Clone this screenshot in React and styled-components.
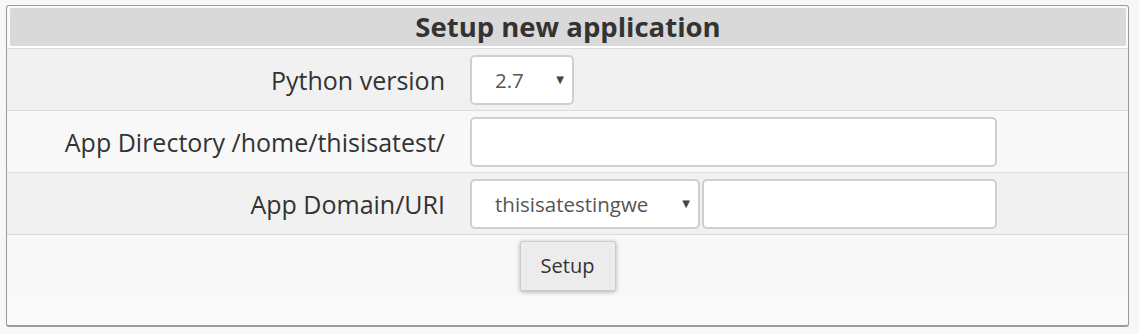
import React from 'react';
import styled, { createGlobalStyle } from 'styled-components';

const GlobalStyle = createGlobalStyle`
  html, body {
    margin: 0;
    padding: 0;
    background: #f7f7f7;
    font-family: "Open Sans", "Liberation Sans", sans-serif;
  }
`;

const Panel = styled.div`
  box-sizing: border-box;
  width: 1123px;
  height: 322px;
  margin: 5px 0 0 6px;
  border: 1px solid #9a9a9a;
  border-bottom-width: 2px;
  border-radius: 3px;
  background: #fafafa;
  overflow: hidden;
`;

const Header = styled.div`
  margin: 2px 2px 0 3px;
  height: 38px;
  background: #d9d9d9;
  border-radius: 2px;
  border-bottom: 2px solid #fff;
  color: #333;
  font-size: 27.5px;
  font-weight: 700;
  line-height: 38px;
  text-align: center;
`;

const Row = styled.div`
  display: grid;
  grid-template-columns: 438px 1fr;
  column-gap: 25px;
  align-items: center;
  height: 61px;
  border-top: 1px solid #dcdcdc;
  background: ${(p) => (p.$shade ? '#f1f1f1' : '#f8f8f8')};
`;

const Label = styled.div`
  text-align: right;
  color: #333;
  font-size: 25px;
`;

const Controls = styled.div`
  display: flex;
  gap: 2px;
`;

const SelectBox = styled.div`
  position: relative;
  box-sizing: border-box;
  width: ${(p) => p.$width}px;
  height: 50px;
  padding-left: 23px;
  border: 2px solid #cfcfcf;
  border-radius: 5px;
  background: #fff;
  color: #555;
  font-size: 20.5px;
  line-height: 46px;
`;

const Arrow = styled.span`
  position: absolute;
  right: 8px;
  top: 0;
  font-family: "DejaVu Sans", sans-serif;
  font-size: 10px;
  color: #444;
`;

const Input = styled.input`
  box-sizing: border-box;
  width: ${(p) => p.$width}px;
  height: 50px;
  border: 2px solid #cfcfcf;
  border-radius: 5px;
  background: #fff;
  outline: none;
`;

const ButtonRow = styled.div`
  display: flex;
  justify-content: center;
  align-items: center;
  height: 61px;
  border-top: 1px solid #dcdcdc;
  background: #f8f8f8;
`;

const Button = styled.button`
  width: 96px;
  height: 50px;
  border: 1px solid #cccccc;
  border-radius: 2px;
  background: #ececec;
  box-shadow: 0 1px 4px rgba(0, 0, 0, 0.3);
  color: #333;
  font-family: "Open Sans", "Liberation Sans", sans-serif;
  font-size: 20px;
`;

const Select = ({ value, width }) => (
  <SelectBox $width={width}>
    {value}
    <Arrow>▼</Arrow>
  </SelectBox>
);

const App = () => (
  <>
    <GlobalStyle />
    <Panel>
      <Header>Setup new application</Header>
      <Row $shade>
        <Label>Python version</Label>
        <Controls>
          <Select value="2.7" width={104} />
        </Controls>
      </Row>
      <Row>
        <Label>App Directory /home/thisisatest/</Label>
        <Controls>
          <Input $width={527} />
        </Controls>
      </Row>
      <Row $shade>
        <Label>App Domain/URI</Label>
        <Controls>
          <Select value="thisisatestingwe" width={230} />
          <Input $width={295} />
        </Controls>
      </Row>
      <ButtonRow>
        <Button>Setup</Button>
      </ButtonRow>
    </Panel>
  </>
);

export default App;
